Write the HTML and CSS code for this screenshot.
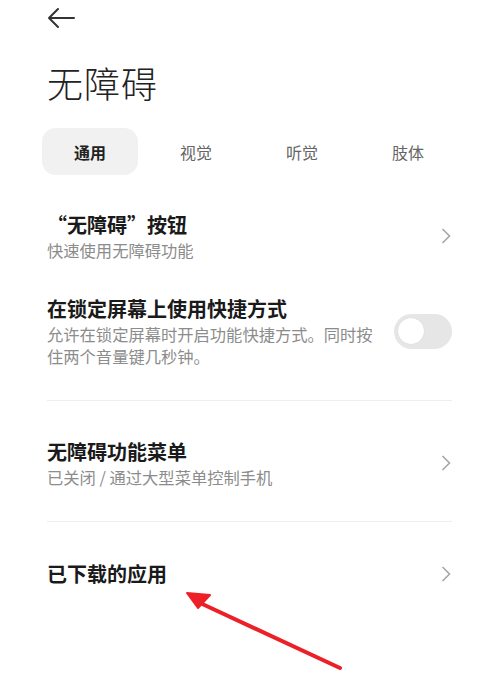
FILE: index.html
```html
<!DOCTYPE html>
<html lang="zh-CN">
  <head>
    <meta charset="UTF-8" />
    <meta name="viewport" content="width=device-width, initial-scale=1.0" />
    <title>无障碍</title>
    <link rel="stylesheet" href="styles.css">
  </head>
  <body>
    <div class="page">
      <div class="topbar">
        <svg class="back" width="28" height="22" viewBox="0 0 28 22">
          <path d="M27 11H2M11 2L2 11l9 9" fill="none" stroke="#333" stroke-width="2" stroke-linecap="round" stroke-linejoin="round" />
        </svg>
      </div>

      <h1 class="title">无障碍</h1>

      <div class="tabs">
        <div class="tab active">通用</div>
        <div class="tab">视觉</div>
        <div class="tab">听觉</div>
        <div class="tab">肢体</div>
      </div>

      <div class="list">
        <div class="row">
          <div class="text">
            <div class="name">“无障碍”按钮</div>
            <div class="desc">快速使用无障碍功能</div>
          </div>
          <svg class="chevron" width="10" height="16" viewBox="0 0 10 16">
            <path d="M1.5 1l7 7-7 7" fill="none" stroke="#a6a6a6" stroke-width="1.6" />
          </svg>
        </div>

        <div class="row">
          <div class="text">
            <div class="name">在锁定屏幕上使用快捷方式</div>
            <div class="desc">允许在锁定屏幕时开启功能快捷方式。同时按住两个音量键几秒钟。</div>
          </div>
          <div class="switch"><div class="knob"></div></div>
        </div>

        <div class="divider"></div>

        <div class="row">
          <div class="text">
            <div class="name">无障碍功能菜单</div>
            <div class="desc">已关闭 / 通过大型菜单控制手机</div>
          </div>
          <svg class="chevron" width="10" height="16" viewBox="0 0 10 16">
            <path d="M1.5 1l7 7-7 7" fill="none" stroke="#a6a6a6" stroke-width="1.6" />
          </svg>
        </div>

        <div class="divider"></div>

        <div class="row single">
          <div class="text">
            <div class="name">已下载的应用</div>
          </div>
          <svg class="chevron" width="10" height="16" viewBox="0 0 10 16">
            <path d="M1.5 1l7 7-7 7" fill="none" stroke="#a6a6a6" stroke-width="1.6" />
          </svg>
        </div>
      </div>

      <!-- red annotation arrow -->
      <svg class="pointer" width="170" height="90" viewBox="0 0 170 90">
        <path d="M168 78L26 12" fill="none" stroke="#ec2027" stroke-width="4" stroke-linecap="round" />
        <path d="M15 3L38 5L26 18Z" fill="#ec2027" stroke="#ec2027" stroke-width="2" stroke-linejoin="round" />
      </svg>
    </div>
  </body>
</html>
```

FILE: styles.css
```css
body {
  margin: 0;
  background: #fff;
  font-family: "Noto Sans CJK SC", "Noto Sans", sans-serif;
  color: #1a1a1a;
}
.page {
  position: relative;
  width: 498px;
  height: 677px;
  overflow: hidden;
  padding: 0 46px 0 47px;
  box-sizing: border-box;
}
.topbar {
  height: 36px;
  display: flex;
  align-items: center;
}
.title {
  margin: 24px 0 0;
  font-size: 36px;
  line-height: 44px;
  font-weight: 300;
  color: #222;
  letter-spacing: 1px;
}
.tabs {
  display: flex;
  gap: 10px;
  margin: 24px -12px 0 -5px;
  height: 47px;
  align-items: center;
}
.tab {
  flex: none;
  width: 96px;
  height: 47px;
  display: flex;
  align-items: center;
  justify-content: center;
  font-size: 16px;
  color: #666;
  border-radius: 14px;
}
.tab.active {
  background: #f1f1f1;
  color: #222;
  font-weight: 700;
}
.list {
  margin-top: 19px;
}
.row {
  display: flex;
  align-items: center;
  padding: 17px 0;
}
.row.single {
  padding: 18px 0 20px;
}
.text {
  flex: 1;
  padding-right: 14px;
}
.name {
  font-size: 20px;
  line-height: 28px;
  font-weight: 700;
  color: #1a1a1a;
}
.desc {
  font-size: 16.3px;
  line-height: 22px;
  color: #8c8c8c;
}
.chevron {
  margin-right: 1px;
}
.switch {
  width: 58px;
  height: 35px;
  border-radius: 18px;
  background: #e6e6e6;
  flex: none;
  display: flex;
  align-items: center;
  padding-left: 4px;
  box-sizing: border-box;
}
.knob {
  width: 26px;
  height: 26px;
  border-radius: 50%;
  background: #fff;
  box-shadow: 0 0 1px rgba(0, 0, 0, 0.15);
}
.divider {
  height: 1px;
  background: #eeeeee;
  margin: 16px 0 20px;
}
.pointer {
  position: absolute;
  left: 172px;
  top: 590px;
}
```
